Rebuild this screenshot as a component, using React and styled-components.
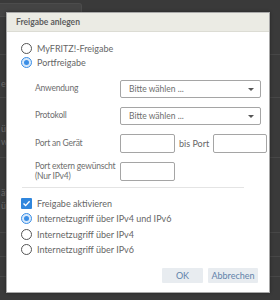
import styled, { createGlobalStyle } from "styled-components";

const GlobalStyle = createGlobalStyle`
    html, body {
        margin: 0;
        padding: 0;
        background: #3a3a3a;
        font-family: 'Lato', 'Liberation Sans', sans-serif;
    }
    * { box-sizing: border-box; }
`;

const Page = styled.div`
    position: relative;
    width: 280px;
    height: 300px;
    overflow: hidden;
    background: #3a3a3a;
`;

const TopTab = styled.div`
    width: 82px;
    height: 14px;
    margin-top: 3px;
    background: #444;
    border: 1px solid #4c4c4c;
    border-left: none;
    border-radius: 0 3px 0 0;
`;

const BgRow = styled.div`
    height: ${props => props.h}px;
    border-bottom: 1px solid #474747;
    color: #6a6a6a;
    font-size: 9px;
    padding: ${props => props.pt || 0}px 0 0 1px;
    display: flex;
    flex-direction: column;
    justify-content: ${props => props.pt ? 'flex-start' : 'center'};
    line-height: 13px;
`;

const Dialog = styled.div`
    position: absolute;
    left: 6px;
    top: 12px;
    width: 264px;
    height: 281px;
    background: #fff;
    border: 1px solid #a8a8a8;
    box-shadow: 0 0 3px rgba(0, 0, 0, 0.4);
    display: flex;
    flex-direction: column;
`;

const Header = styled.div`
    height: 19px;
    background: #ebebe4;
    border-bottom: 1px solid #dcdcd4;
    padding-left: 9px;
    display: flex;
    align-items: center;
    font-size: 8.5px;
    font-weight: 700;
    color: #5e5e5e;
`;

const Body = styled.div`
    flex: 1;
    display: flex;
    flex-direction: column;
    padding: 9px 11px 9px 14px;
`;

const OptionRow = styled.label`
    height: ${props => props.h || 14}px;
    display: flex;
    align-items: center;
    gap: 5px;
    font-size: 9px;
    color: #666;
    white-space: nowrap;
`;

const Radio = styled.span`
    width: 11px;
    height: 11px;
    border-radius: 50%;
    border: 1px solid ${props => props.checked ? '#3a8ee6' : '#555'};
    background: ${props => props.checked ? '#d8e9fb' : '#fff'};
    display: flex;
    align-items: center;
    justify-content: center;
    flex-shrink: 0;

    &::after {
        content: '';
        width: 5px;
        height: 5px;
        border-radius: 50%;
        background: ${props => props.checked ? '#3a8ee6' : 'transparent'};
    }
`;

const Checkbox = styled.span`
    width: 11px;
    height: 11px;
    border-radius: 1px;
    background: #2f86dd;
    display: flex;
    align-items: center;
    justify-content: center;
    flex-shrink: 0;
`;

const FormGrid = styled.div`
    display: grid;
    grid-template-columns: 85px 1fr;
    grid-template-rows: 18px 18px 19px 19px;
    margin: 11px 0 0 14px;
    row-gap: 9px;
    align-items: center;
`;

const Label = styled.div`
    font-size: 8.5px;
    letter-spacing: -0.2px;
    color: #6e6e6e;
    line-height: 9.5px;
    white-space: nowrap;
    align-self: ${props => props.top ? 'start' : 'center'};
`;

const Controls = styled.div`
    display: flex;
    align-items: center;
    gap: 4px;
    font-size: 9px;
    color: #666;
    white-space: nowrap;
`;

const Select = styled.div`
    width: 141px;
    height: 18px;
    border: 1px solid #a5a5a5;
    border-radius: 2px;
    display: flex;
    align-items: center;
    justify-content: space-between;
    padding: 0 6px 0 8px;
    font-size: 8.5px;
    color: #6e6e6e;
`;

const Caret = styled.span`
    width: 0;
    height: 0;
    border-left: 3px solid transparent;
    border-right: 3px solid transparent;
    border-top: 3px solid #555;
`;

const Input = styled.div`
    width: ${props => props.w || 55}px;
    height: 19px;
    border: 1px solid #a5a5a5;
    border-radius: 2px;
    background: #fff;
`;

const Divider = styled.hr`
    border: none;
    border-top: 1px solid #e4e4e4;
    margin: 6px 14px 8px 1px;
`;

const Footer = styled.div`
    margin-top: auto;
    display: flex;
    justify-content: flex-end;
    gap: 5px;
`;

const Button = styled.button`
    width: ${props => props.w}px;
    height: 15px;
    border: none;
    border-radius: 1px;
    background: #e8ecf0;
    color: #6283aa;
    font-family: inherit;
    font-size: 9px;
    padding: 0;
`;

export default function App() {
    return (
        <>
            <GlobalStyle />
            <Page>
                <TopTab />
                <BgRow h={38} />
                <BgRow h={43} pt={22}>e</BgRow>
                <BgRow h={60} pt={24}>üb<br />wi</BgRow>
                <BgRow h={75} pt={28}>ät<br />üb</BgRow>
                <BgRow h={24} />
                <BgRow h={20} />
                <Dialog>
                    <Header>Freigabe anlegen</Header>
                    <Body>
                        <OptionRow><Radio />MyFRITZ!-Freigabe</OptionRow>
                        <OptionRow><Radio checked />Portfreigabe</OptionRow>
                        <FormGrid>
                            <Label>Anwendung</Label>
                            <Select>Bitte wählen ...<Caret /></Select>
                            <Label>Protokoll</Label>
                            <Select>Bitte wählen ...<Caret /></Select>
                            <Label>Port an Gerät</Label>
                            <Controls><Input />bis Port<Input w={54} /></Controls>
                            <Label top>Port extern gewünscht<br />(Nur IPv4)</Label>
                            <Controls><Input /></Controls>
                        </FormGrid>
                        <Divider />
                        <OptionRow h={15}>
                            <Checkbox>
                                <svg width="9" height="9" viewBox="0 0 9 9">
                                    <path d="M1.5 4.6 L3.6 6.6 L7.6 2.2" stroke="#fff" strokeWidth="1.4" fill="none" />
                                </svg>
                            </Checkbox>
                            Freigabe aktivieren
                        </OptionRow>
                        <OptionRow h={15}><Radio checked />Internetzugriff über IPv4 und IPv6</OptionRow>
                        <OptionRow h={16}><Radio />Internetzugriff über IPv4</OptionRow>
                        <OptionRow h={15}><Radio />Internetzugriff über IPv6</OptionRow>
                        <Footer>
                            <Button w={41}>OK</Button>
                            <Button w={50}>Abbrechen</Button>
                        </Footer>
                    </Body>
                </Dialog>
            </Page>
        </>
    );
}
